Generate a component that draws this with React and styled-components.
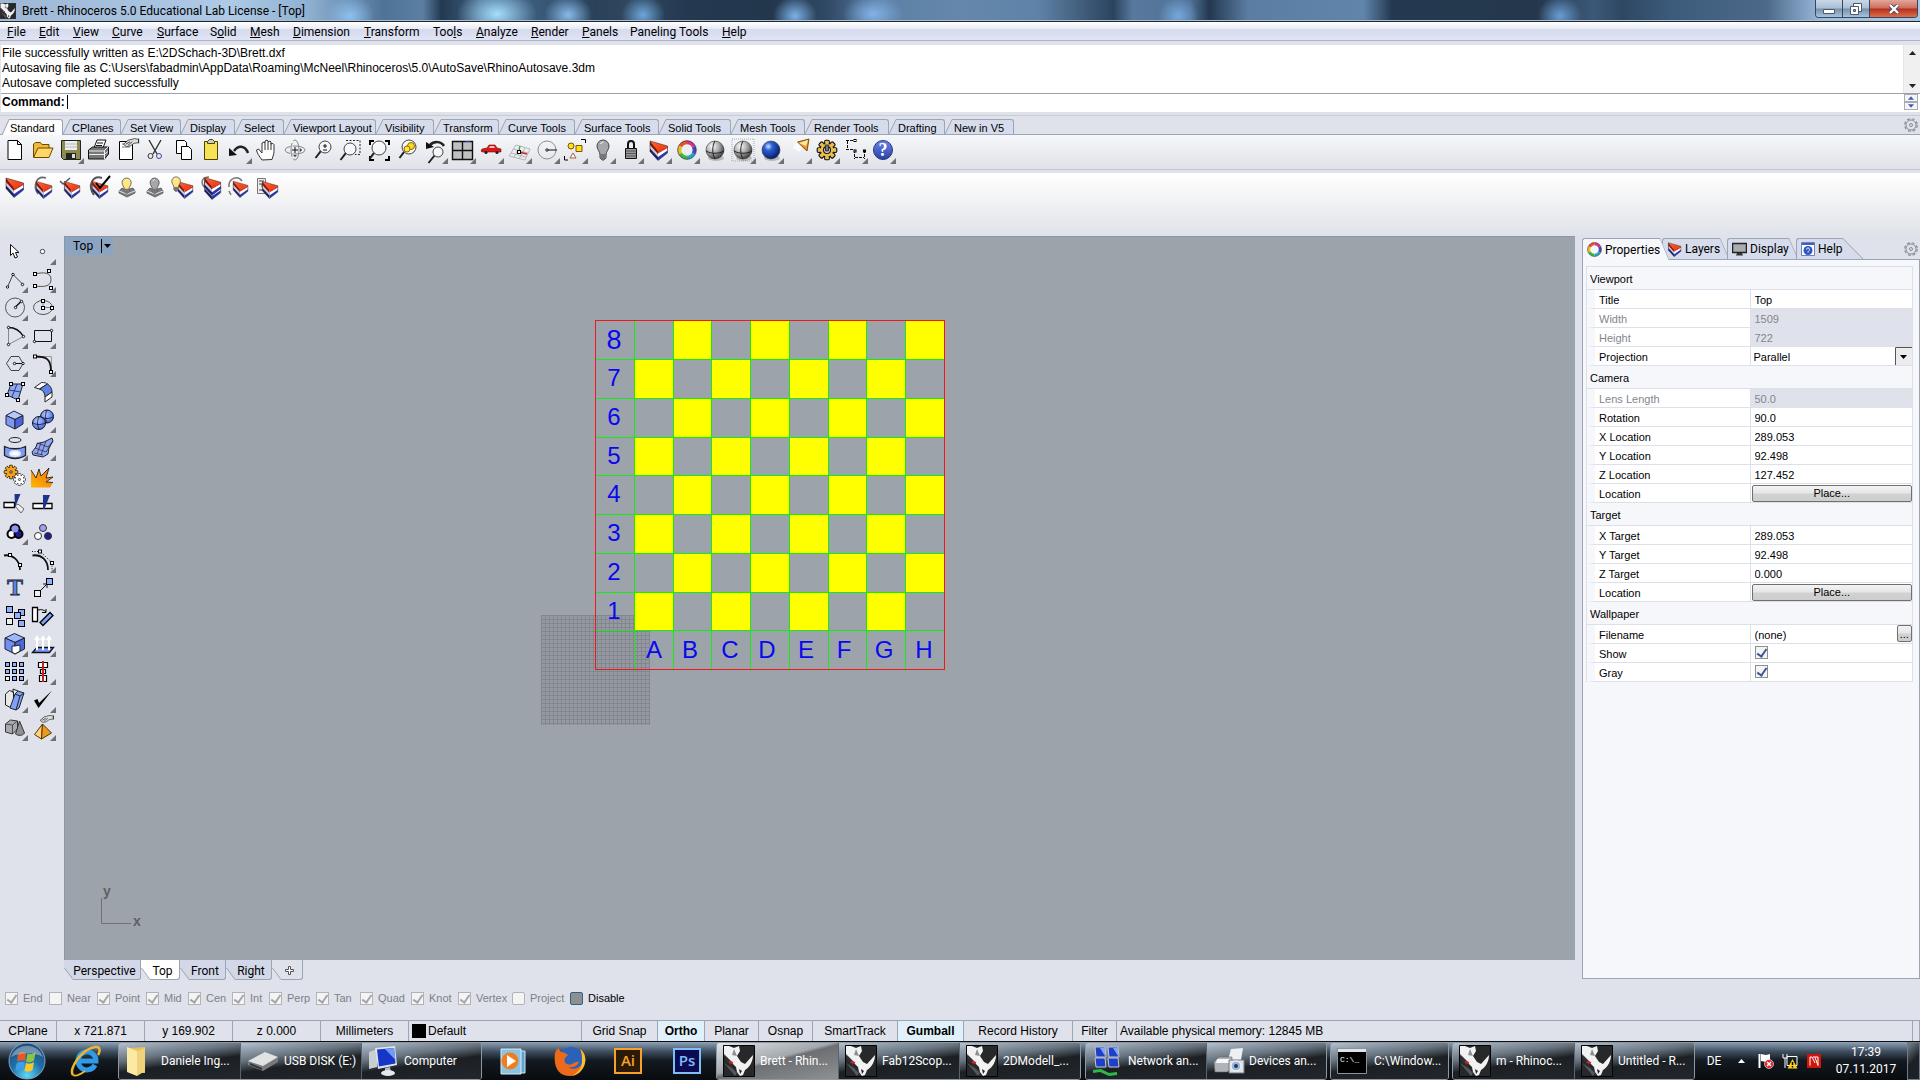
import React from 'react';
import styled, { createGlobalStyle, css } from 'styled-components';

const UI = 'Roboto, "Noto Sans", sans-serif';
const SANS = '"Liberation Sans", Arial, sans-serif';

const GlobalStyle = createGlobalStyle`
  * { box-sizing: border-box; }
  body { margin: 0; background: #dfe2ea; }
  button, input, select { font: inherit; color: inherit; margin: 0; }
  button { padding: 0; border: 0; background: none; }
  svg { display: block; flex: none; }
`

const Page = styled.div`
  display: flex;
  flex-direction: column;
  min-height: 100vh;
  font: 11px/14px ${SANS};
  color: #000;
  background: #dfe2ea;
`

/* title bar */
const TitleBar = styled.header`
  display: flex;
  align-items: flex-start;
  height: 22px;
  border-bottom: 1px solid #23272e;
  box-shadow: inset 0 -1px #a9bed6;
  background:
    radial-gradient(ellipse 24px 20px at 350px 16px, #8cc0ee, transparent),
    radial-gradient(ellipse 40px 26px at 497px 14px, #a5defc, transparent),
    radial-gradient(ellipse 24px 20px at 568px 15px, #86baea, transparent),
    radial-gradient(ellipse 22px 20px at 643px 15px, #6ea6da, transparent),
    radial-gradient(ellipse 22px 20px at 795px 16px, #7cb2e8, transparent),
    radial-gradient(ellipse 30px 20px at 873px 14px, #82b2e6, transparent),
    radial-gradient(ellipse 20px 20px at 1178px 16px, #76a8dc, transparent),
    radial-gradient(ellipse 22px 20px at 1560px 16px, #6a9dd3, transparent),
    linear-gradient(90deg, #9db7d4 0, #aecae6 12%, #8fb1d2 16%, #4f7397 20%, #5b7fa3 22%, #233950 23%, #3f5f80 25%, #3b5a7a 28%, #2b4159 31%, #2f475f 33%, #243850 36%, #22364c 40%, #2f4863 43%, #5d80a6 46%, #6487ab 50%, #5f83a8 54%, #2c435d 58%, #58799d 59%, #4f7195 62%, #23384f 63%, #5b7da3 65%, #6085ab 71%, #24394f 72.5%, #24374d 80%, #3c5878 83%, #2e4763 84.5%, #3c5a7a 87%, #4c698a 92%, #9fbfe0 95%, #a9c8e6 100%);
`
const AppIcon = styled.div`
  padding: 3px 0 0;
`
const Title = styled.h1`
  flex: 1;
  margin: 0;
  padding: 3px 6px 0;
  font: 12px/17px ${UI};
`
const WinButtons = styled.div`
  display: flex;
  height: 18px;
  margin-right: 2px;
  border: 1px solid #34475c;
  border-top: 0;
  border-radius: 0 0 4px 4px;
  overflow: hidden;
`
const WinButton = styled.button`
  display: flex;
  align-items: center;
  justify-content: center;
  width: ${p => (p.$close ? 47 : 27)}px;
  height: 17px;
  border-right: 1px solid #34475c;
  background: linear-gradient(#c9d8e6, #a9bfd4 48%, #7690ab 52%, #a8c3da);
  ${p => p.$close && css`
    border-right: 0;
    background: linear-gradient(#e0a79c, #cf6c5b 48%, #b3301b 52%, #dc6d4c);
  `}
`

/* menu and command area */
const MenuBar = styled.nav`
  display: flex;
  gap: 14px;
  height: 19px;
  padding: 2px 7px 0;
  font: 12px/16px ${UI};
  border-bottom: 1px solid #aeb4c8;
  background: linear-gradient(#ffffff, #e9ecf5 36%, #d5daee 40%, #e0e4f4);
`
const MenuItem = styled.button`
  width: ${p => p.$w}px;
  white-space: nowrap;
  text-align: left;
`
const Command = styled.section`
  display: flex;
  flex-direction: column;
  margin-top: 4px;
  border-left: 1px solid #dfe2ea;
  background: #fff;
  font-size: 12px;
`
const History = styled.div`
  display: flex;
  height: 49px;
  border-bottom: 1px solid #9aa2ae;
`
const HistoryLines = styled.div`
  flex: 1;
  padding: 1px 1px 0;
  line-height: 15px;
`
const Scroll = styled.div`
  display: flex;
  flex-direction: column;
  justify-content: space-between;
  align-items: center;
  width: 17px;
  padding: 6px 0 5px;
  border-left: 1px solid #e4e4e4;
  background: #f0f0f0;
`
const Prompt = styled.div`
  display: flex;
  align-items: center;
  height: 18px;
  padding: 0 0 2px 1px;
  label { font-weight: bold; font-size: 12px; }
`
const PromptInput = styled.input`
  flex: 1;
  height: 14px;
  margin-left: 2px;
  padding: 0;
  border: 0;
  border-left: 1px solid #000;
  outline: 0;
`
const Spinner = styled.div`
  width: 14px;
  margin-right: 2px;
`
const SpinButton = styled.button`
  display: flex;
  align-items: center;
  justify-content: center;
  width: 14px;
  height: 8px;
  border: 1px solid #a9abb0;
  background: #f4f5f9;
`

/* toolbars */
const TabStrip = styled.div`
  display: flex;
  align-items: flex-end;
  height: 20px;
  margin-top: 3px;
  padding-left: 2px;
  border-top: 1px solid #c9ccd4;
  border-bottom: 1px solid #9ba5b4;
`
const Tab = styled.button`
  display: flex;
  width: ${p => p.$w}px;
  height: 15px;
  margin-bottom: ${p => (p.$on ? -1 : 0)}px;
  white-space: nowrap;
  ${p => p.$on && 'height: 16px;'}
`
const TabFace = styled.span`
  flex: 1;
  align-self: stretch;
  padding-left: ${p => (p.$on ? 1 : 2)}px;
  line-height: 16px;
  text-align: left;
  border-top: 1px solid #9ba5b4;
  border-right: 1px solid #9ba5b4;
  border-radius: 0 3px 0 0;
  background: ${p => (p.$on ? '#fdfdfe' : '#d6dcec')};
`
const Spacer = styled.div`
  flex: 1;
`
const GearButton = styled.button`
  align-self: center;
  margin-right: 2px;
`
const Toolbar = styled.div`
  display: flex;
  align-items: flex-start;
  height: ${p => (p.$tall ? 63 : 35)}px;
  padding: ${p => (p.$tall ? 0 : 1)}px 0 0 1px;
  background: linear-gradient(${p => (p.$tall ? '#ffffff' : '#f6f7f9')}, #dfe2e8);
  border-bottom: ${p => (p.$tall ? 0 : 1)}px solid #c3c7d0;
  margin-bottom: ${p => (p.$tall ? 0 : 3)}px;
`
const Tool = styled.button`
  width: 28px;
  height: 28px;
`

/* workspace */
const Workspace = styled.main`
  display: flex;
  flex: 1;
`
const Palette = styled.aside`
  display: grid;
  grid-template-columns: 28px 28px;
  grid-auto-rows: 28px;
  align-content: start;
  width: 64px;
  padding: 1px 0 0 1px;
`
const Center = styled.section`
  display: flex;
  flex-direction: column;
  flex: 1;
  min-width: 0;
`
const Viewport = styled.div`
  position: relative;
  flex: 1;
  min-height: 500px;
  overflow: hidden;
  border-top: 1px solid #8e96a6;
  border-left: 1px solid #8e96a6;
  background: #9ca3ab;
`
const ViewTitle = styled.button`
  position: absolute;
  top: 0;
  left: 0;
  display: flex;
  align-items: center;
  gap: 8px;
  height: 18px;
  padding: 0 2px 0 8px;
  font: 12px/17px ${UI};
  background: #8ba4c1;
`
const ViewMark = styled.span`
  display: flex;
  align-items: center;
  height: 14px;
  padding-left: 2px;
  border-left: 1px solid #000;
`
const Drawing = styled.svg`
  position: absolute;
  top: 0;
  left: 0;
  width: 100%;
  height: 100%;
`
const Axes = styled.svg`
  position: absolute;
  left: 32px;
  bottom: 30px;
`
const ViewTabs = styled.div`
  display: flex;
  height: 20px;
  font: 12px/18px ${UI};
`
const ViewTab = styled.button`
  display: flex;
  width: ${p => p.$w}px;
  height: 20px;
`
const ViewFace = styled.span`
  display: flex;
  align-items: center;
  justify-content: center;
  flex: 1;
  height: 20px;
  padding: 2px 4px 0 0;
  border-right: 1px solid #9ba5b4;
  border-bottom: 1px solid #9ba5b4;
  border-radius: 0 0 3px 0;
  background: ${p => p.$bg};
`

/* properties */
const Side = styled.aside`
  display: flex;
  flex-direction: column;
  width: 345px;
  padding: 2px 0 1px 7px;
`
const PanelTabs = styled.div`
  display: flex;
  height: 22px;
  margin-bottom: -1px;
  font: 12px/20px ${UI};
`
const PanelTab = styled.button`
  display: flex;
  width: ${p => p.$w}px;
  height: ${p => (p.$on ? 22 : 21)}px;
  position: relative;
  z-index: ${p => (p.$on ? 1 : 0)};
`
const PanelFace = styled.span`
  display: flex;
  align-items: center;
  gap: 3px;
  flex: 1;
  align-self: stretch;
  padding-left: 4px;
  white-space: nowrap;
  border: 1px solid #9ba5b4;
  border-width: 1px 0 0 1px;
  border-radius: 3px 0 0 0;
  background: ${p => (p.$on ? '#f6f7fa' : '#d6dcec')};
`
const PanelBody = styled.div`
  flex: 1;
  padding: 6px 6px 0 3px;
  border: 1px solid #9ba5b4;
  background: #f6f7fa;
`
const Props = styled.table`
  width: 100%;
  table-layout: fixed;
  border-collapse: separate;
  border-spacing: 0;
  border-left: 1px solid #dde0ea;
  border-top: 1px solid #dde0ea;
  border-right: 1px solid #dde0ea;
  th, td { padding: 0; font-weight: normal; text-align: left; border-bottom: 1px solid #dde0ea; }
`
const Group = styled.th`
  height: 23px;
  && { padding: 2px 0 0 3px; }
`
const Name = styled.th`
  height: 19px;
  border-left: 8px solid #f6f7fa;
  background: #fff;
  color: ${p => (p.$off ? '#83868c' : '#000')};
  && { padding: 1px 0 0 4px; }
`
const Value = styled.td`
  height: 19px;
  border-left: 1px solid #dde0ea;
  background: ${p => (p.$off ? '#dfe2ea' : '#fff')};
  color: ${p => (p.$off ? '#83868c' : '#000')};
`
const Field = styled.input`
  display: block;
  width: 100%;
  height: 18px;
  padding: 2px 0 0 4px;
  border: 0;
  background: transparent;
`
const SelectWrap = styled.div`
  position: relative;
  svg { position: absolute; top: 0; right: 0; pointer-events: none; }
`
const Select = styled.select`
  display: block;
  width: 100%;
  height: 18px;
  padding: 2px 0 0 3px;
  border: 0;
  appearance: none;
  background: transparent;
`
const Push = styled.button`
  display: block;
  width: calc(100% - 1px);
  height: 17px;
  margin-left: 1px;
  border: 1px solid #707070;
  border-radius: 2px;
  background: linear-gradient(#f3f3f3, #e6e6e6 48%, #d2d2d2 52%, #cdcdcd);
`
const FileRow = styled.div`
  display: flex;
  ${Push} { width: 17px; }
`
const Tick = styled.input`
  display: block;
  flex: none;
  appearance: none;
  width: 13px;
  height: 13px;
  && { margin: ${p => (p.$cell ? '0 0 1px 4px' : '0')}; }
  border: 1px solid ${p => (p.$cell ? '#8e8f8f' : '#b1b3b8')};
  border-radius: ${p => (p.$round ? 2 : 0)}px;
  background: #f4f4f4;
  &:checked::after {
    content: '';
    display: block;
    width: 4px;
    height: 8px;
    margin: 0 0 0 3px;
    border: solid ${p => (p.$cell ? '#3c5594' : '#a5a5a8')};
    border-width: 0 2px 2px 0;
    transform: rotate(35deg);
  }
  ${p => p.$solid && css`
    border-color: #2c628b;
    background: #8e8f8f;
  `}
`

/* osnap, status */
const Snaps = styled.div`
  display: flex;
  height: 40px;
  padding: 11px 0 0 5px;
`
const Snap = styled.label`
  display: flex;
  align-items: center;
  gap: 5px;
  width: ${p => p.$w}px;
  height: 14px;
  color: ${p => (p.$active ? '#000' : '#7d8087')};
  white-space: nowrap;
`
const StatusBar = styled.footer`
  display: flex;
  height: 21px;
  border-top: 1px solid #9ba5b4;
  font-size: 12px;
`
const StatusCell = styled.button`
  display: flex;
  align-items: center;
  justify-content: ${p => (p.$left ? 'flex-start' : 'center')};
  gap: 2px;
  width: ${p => p.$w}px;
  padding-left: ${p => (p.$left ? 3 : 0)}px;
  border-right: 1px solid #9ba5b4;
  font-weight: ${p => (p.$on ? 'bold' : 'normal')};
  background: ${p => (p.$on ? '#e1f1fb' : 'transparent')};
  white-space: nowrap;
  ${p => p.$grow && 'flex: 1;'}
`
const Swatch = styled.span`
  width: 14px;
  height: 14px;
  background: #000;
`

/* taskbar */
const Taskbar = styled.footer`
  display: flex;
  height: 39px;
  border-top: 1px solid #0c1014;
  font: 12px/16px ${UI};
  color: #fff;
  background: linear-gradient(#8ea3b9, #3f4f60 25%, #141a21 48%, #080b0f);
`
const Pinned = styled.button`
  display: flex;
  align-items: center;
  justify-content: center;
  width: ${p => p.$w}px;
`
const TaskGroup = styled.div`
  display: flex;
  margin-right: ${p => p.$mr}px;
  border: 1px solid #8d98a3;
  border-radius: 3px;
  overflow: hidden;
`
const plainTask = 'linear-gradient(172deg, #b4c1ce, #68747f 34%, #33393f 50%, #1c2024 56%, #22272b)'
const activeTask = 'linear-gradient(165deg, #dfe5ea, #a3a8ad 45%, #6d6f72 50%, #8e9194)'
const Task = styled.button`
  display: flex;
  align-items: center;
  gap: ${p => p.$gap}px;
  width: ${p => p.$w}px;
  padding-left: 6px;
  overflow: hidden;
  white-space: nowrap;
  background: ${p => (p.$on ? activeTask : plainTask)};
  & + & { border-left: 1px solid #59646f; }
`
const Tray = styled.div`
  display: flex;
  align-items: center;
  flex: 1;
  justify-content: flex-end;
`
const TrayItem = styled.button`
  display: flex;
  justify-content: center;
  width: ${p => p.$w}px;
`
const Clock = styled.button`
  width: 82px;
  line-height: 17px;
  text-align: center;
`
const ShowDesktop = styled.button`
  align-self: stretch;
  width: 13px;
  border: 1px solid #6f7c88;
  background: linear-gradient(135deg, #75838f, #1c2126 50%);
`

const Defs = styled.svg`
  position: absolute;
`

/* ---------- drawings ---------- */

const Sq = ({ x, y, s = 3, fill = '#fff' }) => (
  <rect x={x - s / 2} y={y - s / 2} width={s} height={s} fill={fill} stroke="#000" />
)
const Dot = ({ x, y, r = 1.2 }) => <circle cx={x} cy={y} r={r} fill="#fff" stroke="#000" strokeWidth=".9" />

// layered wedge: a red top face over red, white and blue slabs
const Wedge = ({ t = '' }) => (
  <g transform={t} stroke="none">
    <path d="M5 5v10.500l8 9V14.500z" fill="#151f6e" />
    <path d="M5 5v7.500l8 8.500v-6.500z" fill="#c9ccd6" />
    <path d="M5 5v4l8 9v-3.500z" fill="#8e1206" />
    <path d="M13 14.500l9.500-4.500v7L13 24.500z" fill="#2238b4" />
    <path d="M13 14.500l9.500-4.500v4.500L13 21z" fill="#fff" />
    <path d="M13 14.500l9.500-4.500v2L13 17.500z" fill="#d63a1c" />
    <path d="M5 5l17.500 5-9.500 5z" fill="url(#red)" />
    <path d="M5 5l17.500 5v7L13 24.500l-8-9z" fill="none" stroke="#3a1414" strokeWidth=".5" />
  </g>
)
const Lens = ({ x = 15, y = 11, r = 6.5 }) => (
  <g>
    <path d={`M${x - r * 0.7} ${y + r * 0.7}L${x - 9.5} ${y + 11}`} stroke="#222" strokeWidth="2" />
    <circle cx={x} cy={y} r={r} fill="#fff" fillOpacity=".5" stroke="#444" />
  </g>
)
const Ball = ({ fill, grid }) => (
  <g>
    <ellipse cx="15" cy="22" rx="8" ry="3" fill="#000" opacity=".2" />
    <circle cx="14" cy="14" r="9" fill={`url(#${fill})`} stroke="#333" strokeWidth=".6" />
    {grid && <path d="M5 15c5 3 13 3 18 0M14 5c-3 5-3 13 0 18" stroke="#222" />}
  </g>
)
const Wheel = () => (
  <g strokeWidth="3.5">
    <path d="M14 6.500a7.500 7.500 0 0 1 6.500 4" stroke="#d9338c" />
    <path d="M14 6.500a7.500 7.500 0 0 0-6.500 4" stroke="#e8502a" />
    <path d="M7.500 10.500a7.500 7.500 0 0 0 0 7" stroke="#e8c21c" />
    <path d="M7.500 17.500a7.500 7.500 0 0 0 6.500 4" stroke="#3db93a" />
    <path d="M14 21.500a7.500 7.500 0 0 0 6.500-4" stroke="#21a9c9" />
    <path d="M20.500 17.500a7.500 7.500 0 0 0 0-7" stroke="#4a45c6" />
    <circle cx="14" cy="14" r="9.3" stroke="#222" strokeWidth=".7" />
  </g>
)
const Bulb = ({ t = '', on }) => (
  <g transform={t}>
    <path d="M14 4a6 6 0 0 0-6 6c0 4 3 5 3 9v3l2 2h2l2-2v-3c0-4 3-5 3-9a6 6 0 0 0-6-6z" fill={on ? '#ffe680' : '#a5a7aa'} stroke="#444" />
    <path d="M11 18h6v4l-2 2h-2l-2-2z" fill="#777" />
    <path d="M11.500 8c1-1.500 2-2 3-2" stroke="#fff" />
  </g>
)
const Stamp = ({ on }) => (
  <g>
    <path d="M6 18l3-3 4 2 7-2 2 3v2l-8 4-8-4z" fill="#7c7e80" stroke="#333" strokeWidth=".6" />
    <path d="M6 18l8 3 8-3" stroke="#ddd" />
    <Bulb t="translate(3 2) scale(.76)" on={on} />
  </g>
)
const Cog = ({ x, y, fill, s = 1, hole = 1.5 }) => (
  <g transform={`translate(${x} ${y}) scale(${s})`} fill={fill} stroke="#111">
    {[0, 45, 90, 135].map(a => <rect key={a} x="-2" y="-8.5" width="4" height="17" rx="1" transform={`rotate(${a})`} />)}
    <circle r="6" />
    {[0, 45, 90, 135].map(a => <rect key={a} x="-1.5" y="-7.5" width="3" height="15" stroke="none" transform={`rotate(${a})`} />)}
    <circle r={hole} fill="#dfe2ea" />
  </g>
)
const Hand = ({ t = '' }) => (
  <g transform={t}>
    <path d="M3 9l6-5 8-2 5 1v4l-6 1-4 3-5 1z" fill="#ddd" stroke="#333" />
    <path d="M6 9l5-3M9 10l5-4M22 2v6" stroke="#222" />
  </g>
)

const ICONS = {
  new: <path d="M7 4.500h9.500l4 4v15H7zM16.500 4.500v4h4" fill="#fff" stroke="#000" />,
  open: <g stroke="#6b4a00"><path d="M4.500 21V8l2-1.500h5l1.500 2h7V12" fill="#f0b93a" /><path d="M4.500 21.500 9 12h15l-4 9.500z" fill="#ffd766" /></g>,
  save: <g><path d="M4.500 4.500h19v19h-17l-2-2z" fill="#8c8a4e" stroke="#222" /><path d="M8 5h12v9H8z" fill="#eceef0" /><path d="M8 8h12M8 11h12" stroke="#b5b8bb" /><path d="M9 17h10v6H9z" fill="#222" /><path d="M15 18h3v4h-3z" fill="#ddd" /></g>,
  print: <g stroke="#111"><path d="M9 12 12 4h9l-3 8" fill="#fff" /><path d="M3.500 14l4-3h16v7l-4 5h-16z" fill="#777" /><path d="M4 15h15l4-4M4 18.500h15l4-3M19.500 15v8" stroke="#eee" /><path d="M12 7h6M11 9.500h6" /></g>,
  prop: <g><path d="M6.500 5.500h13v18h-13z" fill="#fff" stroke="#000" /><path d="M9 8h4M9 11h8" stroke="#777" /><Hand t="translate(8 1) scale(.8)" /></g>,
  cut: <g stroke="#333"><path d="M8 4 16 18M20 4 12 18" strokeWidth="1.4" /><circle cx="9.5" cy="20" r="2.5" /><circle cx="18" cy="20" r="2.5" stroke="#3a4a9c" /></g>,
  copy: <g fill="#fff" stroke="#000"><path d="M7.500 4.500h8l2 2v11h-10z" /><path d="M12.500 10.500h7l3 3v10h-10z" /></g>,
  paste: <g stroke="#4d4300"><path d="M7.500 5.500h13v18h-13z" fill="#f7e255" /><path d="M10.500 7.500v-2l2-2h3l2 2v2z" fill="#ccc" /></g>,
  undo: <g><path d="M9 15C13 9 20 9 23 17" stroke="#222" strokeWidth="2.5" /><path d="M4 12v8l8-1z" fill="#111" /></g>,
  hand: <path d="M9 24C6 20 4 17 3.500 14l2-1 3.500 4V7l2-1 1 1V5l2-1 1 1v1l2-1 1 1v2l2-.5 1 1v7c0 3-1 4-2 8zM12 7v7M15 6v8M18 7v7" fill="#fff" stroke="#333" />,
  rotate: <g stroke="#888"><ellipse cx="14" cy="14" rx="10" ry="4" strokeDasharray="14 2" /><ellipse cx="14" cy="14" rx="4" ry="10" strokeDasharray="14 2" /><path d="M14 11v6M11 14h6" stroke="#111" /><path d="M19 12.500l2 1.500-2 1.500M12.500 19l1.500 2 1.500-2" fill="#111" /></g>,
  zoom: <g><Lens x={16} y={11} r={6} /><path d="M14 10h4M16 8v4M14 14h4" stroke="#111" /></g>,
  zoomwin: <g><path d="M9 4.500h14v14h-5" stroke="#222" strokeDasharray="2 1.500" /><Lens x={13} y={13} r={6} /></g>,
  zoomext: <g><path d="M5 9V5h4M20 5h4v4M24 20v4h-4M5 20v4h4" stroke="#000" strokeWidth="2" /><Lens x={14} y={12} r={7} /></g>,
  zoomsel: <g><Lens x={16} y={11} r={7} /><circle cx="18" cy="10" r="3.5" fill="#ffd91f" stroke="#8a6d00" /><circle cx="14" cy="13" r="3" fill="#ffe640" stroke="#8a6d00" /></g>,
  undoview: <g><Lens x={17} y={16} r={5} /><path d="M9 9c4-4 11-4 14 1" stroke="#222" strokeWidth="2.5" /><path d="M5 6v7l8-2z" fill="#111" /></g>,
  views: <g><path d="M3.500 5.500h20v18h-20z" fill="#bfc0c2" stroke="#111" strokeWidth="1.4" /><path d="M13.500 5v18M3 14.500h20" stroke="#111" strokeWidth="1.4" /><path d="M16 5.500h5" stroke="#2a2ad0" /></g>,
  car: <g><path d="M4 15l1-2 5-1 2-3h6l2 3 4 1v3H5z" fill="#d81717" stroke="#7c0505" strokeWidth=".6" /><path d="M13 10h4l1 2h-6z" fill="#f0c0c0" /><circle cx="9" cy="16.5" r="1.6" fill="#222" /><circle cx="20" cy="16.5" r="1.6" fill="#222" /></g>,
  cplane: <g><path d="M4 20 11 9l14 4-5 11zM6 17l15 4M8 13l15 4M9 21l6-11M14 23l6-11" stroke="#b4b6b9" /><path d="M14 16l1-6" stroke="#2b9b2b" /><path d="M14 16l8 2" stroke="#d02020" strokeWidth="1.5" /><Sq x={14} y={16} /></g>,
  circ: <g><circle cx="14" cy="14" r="9" stroke="#8c8e91" /><path d="M14 14h10" stroke="#111" /><Dot x={14} y={14} /></g>,
  select: <g><circle cx="10" cy="10" r="3" fill="#ffe11a" stroke="#7a5500" /><path d="M15 9.500h6v6h-6z" fill="#ffe11a" stroke="#7a5500" /><path d="M9 22l3-5 3 5z" fill="#fff" stroke="#a55a3a" /><path d="M20 3.500h4.500V7M3.500 20v4H7" stroke="#000" /></g>,
  bulb: <Bulb />,
  lock: <g stroke="#111"><path d="M11 12V8a3 3 0 0 1 6 0v4" strokeWidth="2" /><path d="M8.500 12.500h11v10h-11z" fill="#999" /><path d="M9 15h10M9 17.500h10M9 20h10" stroke="#555" /></g>,
  layer: <Wedge />,
  wheel: <Wheel />,
  ball: <Ball fill="grey" grid />,
  ballsel: <g><path d="M3 3h22v22H3z" stroke="#aaa" strokeDasharray="1 1" /><Ball fill="grey" grid /></g>,
  ballblue: <Ball fill="blue" />,
  light: <g><path d="M11 14 16 6" stroke="#fff" strokeWidth="8" opacity=".7" /><path d="M12.500 6 24 3l-2 12z" fill="#f0961a" stroke="#5b3500" strokeWidth=".8" /><path d="M14 7l9-3-2 6z" fill="#ffe9a0" /></g>,
  gears: <g><Cog x={14} y={14} fill="#e8bf4d" s={1.15} hole={3} /><path d="M12.500 9h3v6h-3z" fill="#777" stroke="#333" /></g>,
  dim: <g stroke="#111"><path d="M5 4.500h8M5 13.500h8M6.500 5v8M13.500 14v9M23.500 14v9M14 21.500h9" strokeDasharray="3 1" /><Sq x={14} y={4.5} s={2} /><Sq x={14} y={15} s={2} /><Sq x={23.5} y={15} s={2} /></g>,
  help: <g><circle cx="14" cy="14" r="9.5" fill="url(#blue2)" stroke="#26367c" /><text x="14" y="20" textAnchor="middle" fontFamily="Liberation Serif, serif" fontWeight="bold" fontSize="18" fill="#fff" stroke="none">?</text></g>,

  w1: <Wedge />,
  w2: <g><path d="M17 5C8 2 3 12 9 21" stroke="#666" strokeWidth="1.5" /><Wedge t="translate(3 4) scale(.88)" /></g>,
  w3: <g><Wedge t="translate(3 4) scale(.88)" /><path d="M3 8l3 3 7-6" stroke="#555" strokeWidth="1.5" /></g>,
  w4: <g><path d="M17 5C8 2 2 12 9 22" stroke="#555" strokeWidth="2" /><Wedge t="translate(3 4) scale(.88)" /><path d="M11 10l4 5L25 3" stroke="#000" strokeWidth="2" /></g>,
  w5: <Stamp on />,
  w6: <Stamp />,
  w7: <g><Wedge t="translate(4 4) scale(.88)" /><Bulb t="translate(-3 1) scale(.72)" on /></g>,
  w8: <g><path d="M12 4C6 4 3 8 7 14" stroke="#777" strokeWidth="1.5" /><Wedge t="translate(3 4) scale(.92)" /><Wedge t="translate(3 0) scale(.92)" /></g>,
  w9: <g><Wedge t="translate(4 4) scale(.84)" /><path d="M4 14C3 5 13 2 17 8M4 18l2 4" stroke="#777" strokeWidth="1.5" /></g>,
  w10: <g><path d="M4.500 5.500h8v15h-8z" fill="#eee" stroke="#777" /><path d="M6 8h5M6 11h3v3h3M6 17h4" stroke="#444" /><Wedge t="translate(5 4) scale(.88)" /></g>,

  arrow: <path d="M9.500 7.500v11l2.500-2.500 2 5 2.500-1-2-4.500H18z" fill="#fff" stroke="#111" />,
  point: <circle cx="13.5" cy="14.5" r="2.2" fill="#fff" stroke="#444" />,
  pline: <g><path d="M6.500 22 12 9.500l10 10" stroke="#444" /><Dot x={6.5} y={22} /><Dot x={12} y={9.5} /><Dot x={21.5} y={19.5} /></g>,
  curve: <g><path d="M6 9c8-2 16-2 16 5.500S14 22 6 21" stroke="#555" /><Sq x={6} y={9} /><Sq x={20} y={6} /><Sq x={6} y={21} /><Sq x={22} y={23} /></g>,
  circle: <g><circle cx="14" cy="14.5" r="9.5" stroke="#555" /><path d="M14 14.500 20.500 8" stroke="#111" strokeWidth="1.4" /><Dot x={14.5} y={14.5} /><Dot x={20.5} y={8.5} /></g>,
  ellipse: <g><ellipse cx="14" cy="14.5" rx="9.5" ry="7" stroke="#555" /><path d="M14 8v6.500h9" stroke="#888" /><Sq x={14} y={8} /><Sq x={14} y={15} /><Sq x={23} y={15} /></g>,
  arc: <g><path d="M7.500 23.500v-17M7.500 23.500l15-8" stroke="#888" /><path d="M7.500 6.500c7 0 12 4 15 9" stroke="#111" strokeWidth="1.4" /><Dot x={7.5} y={6.5} /><Dot x={22.5} y={15.5} /><Dot x={7.5} y={23.5} /></g>,
  rect: <g><path d="M5.500 9.500h17v11h-17z" stroke="#111" /><Dot x={22.5} y={9.5} /><Dot x={5.5} y={20.5} /></g>,
  polygon: <g><path d="M5.500 14.500 10 7.500h8l4 7-4 7h-8z" stroke="#444" /><path d="M14 14.500h8" stroke="#111" /><Dot x={13.5} y={14.5} /><Dot x={22} y={14.5} /></g>,
  fillet: <g><path d="M6 7.500h16.500V23" stroke="#999" /><path d="M6 7.500c11 0 16 2 16 15" stroke="#111" strokeWidth="1.8" /><Sq x={6} y={7.5} /><Sq x={22} y={23} /></g>,
  srf: <g><path d="M10 7h12l-5 16-11-5z" fill="#8fa8f4" stroke="#222" /><path d="M16 7l-5 13M8 13l12 2" stroke="#333a78" /><Sq x={10} y={7} /><Sq x={22} y={7} /><Sq x={17} y={23} /><Sq x={6} y={18} /></g>,
  loft: <g stroke="#222"><path d="M5.500 10.500l7-5c3 0 5 .5 6 1.500l-8 5z" fill="#fff" /><path d="M10.500 12l8-5c3 2 4.500 5 4.500 8l-7 5c0-4-2-7-5.500-8z" fill="#5f82e8" /><path d="M16 20l7-5v5l-7 5z" fill="#fff" /></g>,
  box: <g stroke="#223"><path d="M5 10.500 13 6l9 4.500-8 4z" fill="#b8c6fa" /><path d="M5 10.500l9 4v9.500l-9-4.500z" fill="#7d98f5" /><path d="M22 10.500l-8 4V24l8-5z" fill="#4a66d8" /></g>,
  spheres: <g stroke="#112"><circle cx="18" cy="11.5" r="6.5" fill="url(#blue3)" /><circle cx="10" cy="18" r="6.5" fill="url(#blue3)" /><path d="M12 12c4 2 8 2 12 0M18 5c-2 4-2 9 0 13M4 18c4 2 8 2 12 0M10 12c-2 4-2 8 0 12" strokeWidth=".8" /></g>,
  cylcut: <g stroke="#222"><ellipse cx="14" cy="7" rx="6" ry="2.5" /><path d="M3.500 13.500c6 3 15 3 21 0v9c-6 4-15 4-21 0z" fill="#7d9bf5" strokeWidth="1.3" /><ellipse cx="14" cy="20.5" rx="5" ry="2.5" fill="#fff" stroke="#dfe6ff" strokeWidth="2" /></g>,
  patch: <g stroke="#223"><path d="M8 10.500 15 9l8-4 1 3-4 7-1 6-5 3-10-2-1-3 4-5z" fill="#8ea6f2" /><path d="M8 10l11 4 5-6M6 15l11 4 4-6M5 20l9 2M12 10l-4 11M17 8l-5 14" strokeWidth=".7" /></g>,
  cogs: <g><Cog x={10} y={11} fill="#f5a21b" s={0.8} /><Cog x={18.5} y={18.5} fill="#fff" s={0.7} /></g>,
  explode: <g><path d="M2 9l5 8L10 8l2 7 8-8-3 10 7-1-7 5 7 .5-3 5H2z" fill="url(#fire)" /><path d="M2 9l5 8L10 8l2 7 8-8-3 10 7-1-7 5 7 .5" stroke="#111" strokeWidth=".8" /></g>,
  trim: <g stroke="#000"><path d="M3 13.500h10.500v5H3z" fill="#fff" strokeWidth="1.3" /><path d="M14 17l3-2 6 5-3 4z" fill="#eee" stroke="#666" /><path d="M13.500 5h6L14 18.500z" fill="#1d358c" stroke="none" /></g>,
  split: <g><path d="M4 14.500h19v5H4z" fill="#fff" stroke="#000" strokeWidth="1.3" /><path d="M14 6h7l-5.500 14H14z" fill="#1d358c" /></g>,
  join: <g stroke="#000" strokeWidth="2"><circle cx="14" cy="12" r="4.5" fill="#8e92f0" /><circle cx="10.5" cy="17" r="4" fill="#fff" /><circle cx="17.5" cy="17" r="4" fill="#1c1c8a" /><circle cx="14" cy="12" r="3.5" fill="#8e92f0" stroke="none" /></g>,
  unjoin: <g stroke="#333"><circle cx="14" cy="11" r="3.5" fill="#9e9ff8" /><circle cx="9" cy="19" r="3.5" fill="#fff" /><circle cx="19" cy="19" r="3.5" fill="#1c1c8a" /></g>,
  bridge: <g><path d="M3 10.500C11 9 19 15 19 25" stroke="#111" strokeWidth="1.8" /><Sq x={9} y={10} /><Sq x={19} y={20} /></g>,
  handles: <g><path d="M3.500 10.500C12 9 19 15 19 25" stroke="#111" strokeWidth="1.8" /><path d="M3 6.500h8l12 11V26" stroke="#111" strokeDasharray="1 1.5" /><Sq x={11} y={6.5} /><Sq x={23} y={18} /></g>,
  text: <text x="14" y="22" textAnchor="middle" fontFamily="Liberation Serif, serif" fontWeight="bold" fontSize="24" fill="#5d83ea" stroke="#223" strokeWidth=".8">T</text>,
  move: <g><path d="M12 17l6-6M14 11h4v4" stroke="#111" /><Sq x={8.5} y={20.5} s={6} fill="#eee" /><Sq x={20.5} y={8.5} s={6} fill="#8fb0fa" /></g>,
  group: <g><Sq x={8.5} y={8.5} s={6} fill="#8fb0fa" /><Sq x={20.5} y={11.5} s={6} fill="#8fb0fa" /><Sq x={16.5} y={14.5} s={6} fill="#8fb0fa" /><Sq x={8.5} y={20.5} s={6} fill="#eee" /><Sq x={20.5} y={22.5} s={6} fill="#8fb0fa" /></g>,
  rotate2: <g stroke="#000"><path d="M3.500 6.500h5v14h-5z" fill="#fff" strokeWidth="1.3" /><path d="M21 11.500l3 3-10 10-3-3z" fill="#7fa2f7" strokeWidth="1.3" /><path d="M9 9c4-1 6 0 8 2M17 8v3.500h-4" /></g>,
  boolean: <g stroke="#223"><path d="M4 9l9.500-4.500L23.500 9l-9.500 4.500z" fill="#9fb6fb" /><path d="M4 9l10 4.500V25L4 20z" fill="#6f8ff5" /><path d="M23.500 9 14 13.500V25l9.500-5z" fill="#4968dc" /><path d="M11 17h3l5-1v6l-5 3-3-2z" fill="#fff" /></g>,
  extrude: <g><path d="M3.500 23.500 8 18.500h16.500l-4 5z" fill="#7d9bf5" stroke="#112" strokeWidth="1.3" /><path d="M8 21V10M14 21V10M20 21V10M6 11l2-3 2 3M12 11l2-3 2 3M18 11l2-3 2 3" stroke="#fff" strokeWidth="2" /></g>,
  array: <g>{[7.5, 14.5, 21.5].map(y => [6.5, 13.5, 20.5].map(x => <Sq key={x + '-' + y} x={x} y={y} s={4} fill={x < 7 && y > 21 ? '#eee' : '#8fb0fa'} />))}</g>,
  align: <g><path d="M9.500 5.500h9v5h-9zM11.500 12.500h5v4h-5zM10.500 18.500h7v6h-7z" fill="#fff" stroke="#000" strokeWidth="1.2" /><path d="M14 4v21" stroke="#c81e1e" strokeWidth="2" /></g>,
  flow: <g stroke="#222"><path d="M4.500 9l4-3.500 4 1.500v12l-4 3-4-2z" fill="#e8e8e8" /><path d="M14 9l3-3 6 2-5 15-3 2-6-2z" fill="#7fa2f7" /><path d="M14 9l5 2-4 14M19 11l4-3M12 8V4l5 2" /></g>,
  check: <path d="M5 15.500 8.500 14l1.500 4L23 5.500 9.500 23z" fill="#000" />,
  solids: <g stroke="#333"><path d="M4.500 11l5-4 7 1v8l-5 5-7-2z" fill="#a8aaad" /><path d="M4.500 11l7 1 5-4M11.500 12v9" strokeWidth=".8" /><path d="M18.500 8l5 12c-2 3-6 3-9 1z" fill="#8f9194" /></g>,
  pyramid: <g><Hand t="translate(9 1) scale(.7)" /><path d="M13.500 11 5.500 21.500l7 4.500z" fill="#ffd37a" stroke="#553300" /><path d="M13.500 11l9 9-10 6z" fill="#e89b1f" stroke="#553300" /></g>,
}

const Icon = ({ name, flyout }) => (
  <svg width="28" height="28" viewBox="0 0 28 28" fill="none">
    {ICONS[name]}
    {flyout && <path d="M27 22v6h-6z" fill="#6d7075" />}
  </svg>
)

const Triangle = ({ up, color = '#222', s = 7 }) => (
  <svg width={s} height="4" viewBox="0 0 7 4"><path d={up ? 'M0 4 3.500 0 7 4z' : 'M0 0h7L3.500 4z'} fill={color} /></svg>
)

const Gear = () => (
  <svg width="14" height="14" viewBox="0 0 14 14" fill="none" stroke="#888b92">
    <circle cx="7" cy="7" r="5" />
    <circle cx="7" cy="7" r="6.3" strokeDasharray="3 1.95" strokeWidth="1.2" />
    <circle cx="7" cy="7" r="1.5" />
  </svg>
)

const Rhino = ({ w = 32, h = 32 }) => (
  <svg width={w} height={h} viewBox="0 0 32 32">
    <path d="M.5.500h31v31H.5z" fill="#26282a" stroke="#050505" />
    <path d="M1 1h5l5 2 5-2 1 5-3 5 4 6 4 2 8-9c0 6-3 12-8 15l-2 5-3 1-3-4-1-5-5-5-5-3-2-5z" fill="#f2f2f2" />
    <path d="M1 9l5 5 3 3v5L3 16z" fill="#2e3032" />
    <path d="M11 4l3 7-5-1z" fill="#8c8e90" />
    <path d="M1 18l8 5 5 5-2 3-5-6z" fill="#55585a" />
    <path d="M6 17l4 1" stroke="#e02020" strokeWidth="2" />
    <path d="M16 24l3 2-2 3z" fill="#222" />
  </svg>
)

const Orb = () => (
  <svg width="38" height="38" viewBox="0 0 38 38">
    <circle cx="19" cy="19" r="18" fill="url(#orb)" stroke="#7fa6c4" />
    <path d="M10 12c3-2 5-2 8-1l-1 8c-3-1-5-1-8 1z" fill="#e8582a" />
    <path d="M19.500 11.500c3 1 5 1 8-1l-1.500 8c-3 2-5 2-8 1z" fill="#8cc63c" />
    <path d="M8.500 21.500c3-2 5-2 8-1l-1 7.500c-3-1-5-1-8 1z" fill="#3f9ee8" />
    <path d="M18 21c3 1 5 1 8-1l-1.500 8c-3 2-5 2-8 1z" fill="#fbc82c" />
    <path d="M3 15a17 17 0 0 1 32 0c-9-5-23-5-32 0z" fill="#fff" opacity=".35" />
  </svg>
)
const Explorer = () => (
  <svg width="32" height="32" viewBox="0 0 32 32" fill="none">
    <path d="M25 20a9 9 0 1 1 1-4H10" stroke="#2f9ae6" strokeWidth="5" />
    <path d="M3 30C-2 24 12 4 25 2c6-1 5 5 3 8" stroke="#f0b52a" strokeWidth="2.5" />
    <path d="M3 30c3 2 8-1 12-4" stroke="#f0b52a" strokeWidth="2" />
  </svg>
)
const Folder = () => (
  <svg width="24" height="32" viewBox="0 0 24 32">
    <path d="M4 3l16-1v26H8z" fill="#e3c260" />
    <path d="M2 2l10 4v25L2 27z" fill="#fbe9a4" />
    <path d="M12 6l8-3v23l-8 5z" fill="#f0d27a" />
  </svg>
)
const Disk = () => (
  <svg width="32" height="22" viewBox="0 0 32 22">
    <path d="M1 11 18 2l13 5v5l-15 9-15-6z" fill="#77797c" />
    <path d="M1 11 18 2l13 5-15 9z" fill="#e0e2e4" />
    <path d="M3 13l12 5v2L3 15z" fill="#333" />
  </svg>
)
const Computer = () => (
  <svg width="30" height="32" viewBox="0 0 30 32">
    <path d="M1 7l8-3v18l-8 2z" fill="#c9ced2" />
    <path d="M7 3l20-2 2 19-19 4z" fill="#dfe4e8" />
    <path d="M9 4.500 26 3l1.500 15.500-16.500 3z" fill="#1636c8" />
    <path d="M17 4l9-1 1.500 12z" fill="#6f9cf5" />
    <path d="M17 23l5-1 1 5h-6z" fill="#b6bbc0" />
    <ellipse cx="20" cy="28" rx="7" ry="3" fill="#e6e9ec" />
  </svg>
)
const Media = () => (
  <svg width="28" height="30" viewBox="0 0 28 30">
    <path d="M6 5h20v22H6z" fill="#5fa3cf" stroke="#cfe6f5" />
    <path d="M2 3h20v25H2z" fill="#8cc3e2" stroke="#d7ecf8" />
    <circle cx="11" cy="15" r="8.5" fill="#f07c1c" />
    <path d="M8 9l9 6-9 6z" fill="#fff" />
  </svg>
)
const Firefox = () => (
  <svg width="32" height="32" viewBox="0 0 32 32">
    <circle cx="17" cy="15" r="13" fill="#2b62b8" />
    <path d="M1 8c1-3 2-3 3-5l3 4c2 0 5 1 7 3l-3 3c-2 4 2 8 7 6 3-1 4-3 7-2-2 5-8 6-11 5 5 4 14 1 15-6 1-5-1-9-3-12 5 4 6 9 5 14-2 9-9 13-15 13C6 31-1 24 1 8z" fill="#ee6a1b" />
    <path d="M26 4c5 4 6 9 5 14-2 8-8 12-13 13 6-3 10-9 10-15 0-5 0-8-2-12z" fill="#fbc02a" />
  </svg>
)
const Adobe = ({ label, bg, fg }) => (
  <svg width="28" height="26" viewBox="0 0 28 26">
    <path d="M1 1h26v24H1z" fill={bg} stroke={fg} strokeWidth="2" />
    <text x="14" y="18" textAnchor="middle" fontFamily="Open Sans, sans-serif" fontWeight="600" fontSize="15" fill={fg}>{label}</text>
  </svg>
)
const Network = () => (
  <svg width="30" height="32" viewBox="0 0 30 32">
    <path d="M3 2h10l1 10H4zM16 2h10l1 10H17zM3 13h10l1 9H4zM16 13h10l1 9H17z" fill="#1d3fc9" stroke="#c3c9d0" />
    <path d="M8 3l5 8V3zM21 3l5 8V3z" fill="#7ea6f4" />
    <path d="M1 25l8-1 8 4 8-1v3l-8 1-9-4-7 1z" fill="#2fb84a" />
  </svg>
)
const Devices = () => (
  <svg width="32" height="28" viewBox="0 0 32 28">
    <path d="M18 2l12-1-2 12H15z" fill="#eef1f3" />
    <path d="M1 15l5-5h13v12l-5 3H2z" fill="#aeb4b9" stroke="#666" strokeWidth=".6" />
    <path d="M4 12h13v4H3z" fill="#f5f7f8" />
    <path d="M16 13h15v13H16z" fill="#dde2e6" stroke="#778" />
    <circle cx="23" cy="19" r="5" fill="#9db8d6" stroke="#fff" />
    <circle cx="23" cy="19" r="2" fill="#1c3a66" />
  </svg>
)
const Terminal = () => (
  <svg width="30" height="26" viewBox="0 0 30 26">
    <path d="M.5.500h29v25H.5z" fill="#000" stroke="#8c9299" />
    <path d="M1 1h28v3H1z" fill="#dfe4ea" />
    <text x="3" y="14" fontFamily="Liberation Mono, monospace" fontSize="8" fill="#fff">C:\_</text>
  </svg>
)
const HelpBook = () => (
  <svg width="14" height="14" viewBox="0 0 14 14">
    <path d="M.5.500h13v13H.5z" fill="#fff" stroke="#6d83b8" />
    <path d="M1 1h12v2H1z" fill="#3a5fc8" />
    <circle cx="7" cy="8.5" r="4.5" fill="#2f55c6" />
    <path d="M5.500 7.500c0-2 3-2 3 0 0 1.500-1.500 1-1.500 3" stroke="#fff" fill="none" />
  </svg>
)
const Monitor = () => (
  <svg width="15" height="14" viewBox="0 0 15 14">
    <path d="M.5 1.500h14v9H.5z" fill="#a9acb0" stroke="#222" strokeWidth="1.5" />
    <path d="M5 11h5l1 2.500H4z" fill="#333" />
  </svg>
)
const PanelIcon = ({ children, box = '4 4 20 20' }) => (
  <svg width="15" height="15" viewBox={box} fill="none">{children}</svg>
)

/* ---------- data ---------- */

const menus = [
  ['', 'F', 'ile', 18], ['', 'E', 'dit', 20], ['', 'V', 'iew', 25], ['', 'C', 'urve', 31], ['', 'S', 'urface', 39],
  ['S', 'o', 'lid', 26], ['', 'M', 'esh', 29], ['', 'D', 'imension', 57], ['', 'T', 'ransform', 55], ['Too', 'l', 's', 29],
  ['', 'A', 'nalyze', 41], ['', 'R', 'ender', 37], ['', 'P', 'anels', 34], ['Paneling Tools', '', '', 78], ['', 'H', 'elp', 25]
]

const tabs = [
  ['Standard', 61], ['CPlanes', 58], ['Set View', 60], ['Display', 54], ['Select', 49], ['Viewport Layout', 92],
  ['Visibility', 58], ['Transform', 65], ['Curve Tools', 76], ['Surface Tools', 84], ['Solid Tools', 72],
  ['Mesh Tools', 74], ['Render Tools', 84], ['Drafting', 56], ['New in V5', 69]
]

// a trailing + means the tool has a flyout
const mainTools = ('new open save+ print prop cut copy paste undo+ hand rotate zoom zoomwin zoomext zoomsel undoview+ views+ car+ ' +
  'cplane+ circ+ select+ bulb+ lock+ layer+ wheel+ ball ballsel+ ballblue+ light+ gears+ dim+ help+').split(' ')
const layerTools = 'w1 w2 w3 w4 w5 w6 w7 w8 w9 w10'.split(' ')
const sideTools = ('arrow point+ pline+ curve+ circle+ ellipse+ arc+ rect+ polygon+ fillet+ srf+ loft+ box+ spheres+ cylcut+ patch+ ' +
  'cogs explode trim split join+ unjoin bridge handles+ text move+ group rotate2 boolean+ extrude+ array+ align+ flow+ check+ solids+ pyramid+').split(' ')

const groups = [
  ['Viewport', [['Title', 'Top'], ['Width', '1509', 'off'], ['Height', '722', 'off'], ['Projection', 'Parallel', 'select']]],
  ['Camera', [['Lens Length', '50.0', 'off'], ['Rotation', '90.0'], ['X Location', '289.053'], ['Y Location', '92.498'], ['Z Location', '127.452'], ['Location', 'Place...', 'button']]],
  ['Target', [['X Target', '289.053'], ['Y Target', '92.498'], ['Z Target', '0.000'], ['Location', 'Place...', 'button']]],
  ['Wallpaper', [['Filename', '(none)', 'file'], ['Show', '', 'check'], ['Gray', '', 'check']]]
]

const snaps = [
  ['End', 44, true], ['Near', 48, false], ['Point', 49, true], ['Mid', 42, true], ['Cen', 44, true], ['Int', 37, true],
  ['Perp', 47, true], ['Tan', 44, true], ['Quad', 51, true], ['Knot', 47, true], ['Vertex', 54, true], ['Project', 58, false], ['Disable', 70, false]
]

const status = [
  ['CPlane', 57], ['x 721.871', 88], ['y 169.902', 88], ['z 0.000', 88], ['Millimeters', 88], ['Default', 173], ['Grid Snap', 76],
  ['Ortho', 47, true], ['Planar', 54], ['Osnap', 54], ['SmartTrack', 85], ['Gumball', 66, true], ['Record History', 109], ['Filter', 44]
]

/* ---------- parts ---------- */

const Tools = ({ list }) => list.map(t => {
  const name = t.replace('+', '')
  return <Tool key={name} aria-label={name}><Icon name={name} flyout={t !== name} /></Tool>
})

const cols = [595, 634, 673, 711, 750, 789, 828, 866, 905, 944]
const rows = [320, 359, 398, 437, 475, 514, 553, 592, 630, 669]
const letters = [['A', 654], ['B', 690], ['C', 730], ['D', 767], ['E', 806], ['F', 844], ['G', 884], ['H', 924]]

const Board = () => {
  const squares = []
  for (let r = 0; r < 8; r++) {
    for (let c = 1; c < 9; c++) {
      if ((r + c) % 2 === 0) {
        squares.push(<rect key={r + '-' + c} x={cols[c]} y={rows[r]} width={cols[c + 1] - cols[c]} height={rows[r + 1] - rows[r]} fill="#ffff00" />)
      }
    }
  }
  return (
    <g transform="translate(-65 -237)">
      <rect x="541" y="615" width="109" height="110" fill="#959aa2" />
      <rect x="541" y="615" width="109" height="110" fill="url(#mesh)" />
      {squares}
      <g stroke="#14ec14" shapeRendering="crispEdges">
        {cols.slice(1, 9).map(x => <path key={x} d={`M${x}.5 321V670`} />)}
        {rows.slice(1, 9).map(y => <path key={y} d={`M596 ${y}.5H944`} />)}
      </g>
      <rect x="595.5" y="320.5" width="349" height="349" fill="none" stroke="#f01818" shapeRendering="crispEdges" />
      <g fill="#0808f0" fontFamily="Liberation Sans, Arial, sans-serif" fontSize="24" textAnchor="middle">
        {[8, 7, 6, 5, 4, 3, 2, 1].map((n, i) => <text key={n} x="614" y={rows[i] + (n === 8 ? 29 : 27)} fontSize={n === 8 ? 27 : 24}>{n}</text>)}
        {letters.map(([n, x]) => <text key={n} x={x} y="658">{n}</text>)}
      </g>
    </g>
  )
}

const PropRow = ({ group, row }) => {
  const [name, value, kind] = row
  const id = (group + '-' + name).toLowerCase().replace(/ /g, '-')
  const off = kind === 'off'
  let control = <Field id={id} defaultValue={value} disabled={off} />
  if (kind === 'select') {
    control = (
      <SelectWrap>
        <Select id={id}><option>{value}</option></Select>
        <svg width="17" height="18" viewBox="0 0 17 18"><path d="M.5 18V.5H17" fill="#ececec" stroke="#555" /><path d="M1 1h16v17H1z" fill="#ececec" /><path d="M5 8h7l-3.500 4z" /></svg>
      </SelectWrap>
    )
  }
  if (kind === 'button') control = <Push id={id}>{value}</Push>
  if (kind === 'file') control = <FileRow><Field id={id} defaultValue={value} /><Push aria-label="Browse">...</Push></FileRow>
  if (kind === 'check') control = <Tick $cell id={id} type="checkbox" defaultChecked />
  return (
    <tr>
      <Name $off={off} scope="row"><label htmlFor={id}>{name}</label></Name>
      <Value $off={off}>{control}</Value>
    </tr>
  )
}

const SidePanelTab = ({ label, icon, w, slant, on }) => (
  <PanelTab $w={w} $on={on}>
    <PanelFace $on={on}>{icon}{label}</PanelFace>
    <svg width={slant} height={on ? 22 : 21} viewBox="0 0 20 21" preserveAspectRatio="none">
      <path d="M0 0 20 21H0z" fill={on ? '#f6f7fa' : '#d6dcec'} />
      <path d="M0 .5 20 21" stroke="#9ba5b4" />
    </svg>
  </PanelTab>
)

const BottomTab = ({ children, w, bg = '#d2d8e8' }) => (
  <ViewTab $w={w}>
    <svg width="9" height="20" viewBox="0 0 9 20">
      <path d="M0 0v8l9 12V0z" fill={bg} />
      <path d="M.5 8 9 19.500" stroke="#9ba5b4" fill="none" />
    </svg>
    <ViewFace $bg={bg}>{children}</ViewFace>
  </ViewTab>
)

const App = () => (
  <Page>
    <GlobalStyle />
    <Defs width="0" height="0">
      <defs>
        <linearGradient id="red" x1="0" y1="0" x2="1" y2="1"><stop stopColor="#ff6a3a" /><stop offset="1" stopColor="#e8300c" /></linearGradient>
        <radialGradient id="grey" cx=".35" cy=".3" r=".75"><stop stopColor="#fff" /><stop offset=".5" stopColor="#aaa" /><stop offset="1" stopColor="#333" /></radialGradient>
        <radialGradient id="blue" cx=".35" cy=".3" r=".75"><stop stopColor="#cfe4ff" /><stop offset=".3" stopColor="#2a62d8" /><stop offset="1" stopColor="#06185c" /></radialGradient>
        <linearGradient id="blue2" x1="0" y1="0" x2="0" y2="1"><stop stopColor="#6d86e6" /><stop offset="1" stopColor="#2a3fa8" /></linearGradient>
        <radialGradient id="blue3" cx=".4" cy=".35" r=".7"><stop stopColor="#b5c8ff" /><stop offset="1" stopColor="#3f63dc" /></radialGradient>
        <linearGradient id="fire" x1="0" y1="1" x2="1" y2="0"><stop stopColor="#ffb800" /><stop offset="1" stopColor="#f06a10" /></linearGradient>
        <radialGradient id="orb" cx=".5" cy=".9" r=".9"><stop stopColor="#5fd8f5" /><stop offset=".5" stopColor="#1f6ea8" /><stop offset="1" stopColor="#244a70" /></radialGradient>
        <pattern id="mesh" x="541" y="615" width="4" height="4" patternUnits="userSpaceOnUse"><path d="M0 .5h4M.5 0v4" stroke="#82878f" /></pattern>
      </defs>
    </Defs>

    <TitleBar>
      <AppIcon><Rhino w={16} h={16} /></AppIcon>
      <Title>Brett - Rhinoceros 5.0 Educational Lab License - [Top]</Title>
      <WinButtons>
        <WinButton aria-label="Minimize"><svg width="12" height="11"><path d="M.5 6.500h11v4H.5z" fill="#fff" stroke="#4a5a70" /></svg></WinButton>
        <WinButton aria-label="Restore"><svg width="12" height="12" fill="#fff" stroke="#4a5a70"><path d="M3.500.5h8v8h-8z" /><path d="M.5 3.500h8v8h-8z" /><path d="M3.500 6.500h2v2h-2z" fill="#8ca4bd" /></svg></WinButton>
        <WinButton $close aria-label="Close"><svg width="12" height="10" viewBox="0 0 12 10"><path d="M2 1l8 8M10 1 2 9" stroke="#4a4a5c" strokeWidth="4" /><path d="M2 1l8 8M10 1 2 9" stroke="#fff" strokeWidth="2.4" /></svg></WinButton>
      </WinButtons>
    </TitleBar>

    <MenuBar>
      {menus.map(([a, key, b, w]) => <MenuItem key={a + key + b} $w={w}>{a}{key && <u>{key}</u>}{b}</MenuItem>)}
    </MenuBar>

    <Command>
      <History>
        <HistoryLines>
          <div>File successfully written as E:\2DSchach-3D\Brett.dxf</div>
          <div>Autosaving file as C:\Users\fabadmin\AppData\Roaming\McNeel\Rhinoceros\5.0\AutoSave\RhinoAutosave.3dm</div>
          <div>Autosave completed successfully</div>
        </HistoryLines>
        <Scroll><Triangle up /><Triangle /></Scroll>
      </History>
      <Prompt>
        <label htmlFor="command">Command:</label>
        <PromptInput id="command" />
        <Spinner>
          <SpinButton aria-label="Previous"><Triangle up color="#4458a8" s={6} /></SpinButton>
          <SpinButton aria-label="Next"><Triangle color="#4458a8" s={6} /></SpinButton>
        </Spinner>
      </Prompt>
    </Command>

    <TabStrip>
      {tabs.map(([label, w], i) => (
        <Tab key={label} $w={w} $on={i === 0}>
          <svg width="7" height={i === 0 ? 16 : 15} viewBox="0 0 7 15" preserveAspectRatio="none">
            <path d="M0 15 7 0v15z" fill={i === 0 ? '#fdfdfe' : '#d6dcec'} />
            <path d="M0 15 7 .5" stroke="#9ba5b4" />
          </svg>
          <TabFace $on={i === 0}>{label}</TabFace>
        </Tab>
      ))}
      <Spacer />
      <GearButton aria-label="Toolbar options"><Gear /></GearButton>
    </TabStrip>
    <Toolbar><Tools list={mainTools} /></Toolbar>
    <Toolbar $tall><Tools list={layerTools} /></Toolbar>

    <Workspace>
      <Palette><Tools list={sideTools} /></Palette>
      <Center>
        <Viewport>
          <Drawing><Board /></Drawing>
          <ViewTitle>Top<ViewMark><Triangle color="#000" /></ViewMark></ViewTitle>
          <Axes width="48" height="46" viewBox="0 0 48 46">
            <path d="M4.500 14v25.500H34" fill="none" stroke="#6e7176" />
            <g fill="#5e6064" fontFamily="Liberation Sans, Arial, sans-serif" fontSize="14" fontWeight="bold">
              <text x="6" y="12">y</text>
              <text x="36" y="42">x</text>
            </g>
          </Axes>
        </Viewport>
        <ViewTabs>
          <BottomTab w={77}>Perspective</BottomTab>
          <BottomTab w={39} bg="#ffffff">Top</BottomTab>
          <BottomTab w={46}>Front</BottomTab>
          <BottomTab w={46}>Right</BottomTab>
          <BottomTab w={31} bg="#dfe2ea">
            <svg width="9" height="9"><path d="M3.500.5h2v3h3v2h-3v3h-2v-3h-3v-2h3z" fill="#fff" stroke="#555" /></svg>
          </BottomTab>
        </ViewTabs>
      </Center>
      <Side>
        <PanelTabs>
          <SidePanelTab on w={80} slant={9} label="Properties" icon={<PanelIcon><Wheel /></PanelIcon>} />
          <SidePanelTab w={65} slant={9} label="Layers" icon={<PanelIcon box="4 4 19 21"><Wedge /></PanelIcon>} />
          <SidePanelTab w={69} slant={9} label="Display" icon={<Monitor />} />
          <SidePanelTab w={65} slant={20} label="Help" icon={<HelpBook />} />
          <Spacer />
          <GearButton aria-label="Panel options"><Gear /></GearButton>
        </PanelTabs>
        <PanelBody>
          <Props>
            <tbody>
              {groups.map(([title, list]) => (
                <React.Fragment key={title}>
                  <tr><Group colSpan={2}>{title}</Group></tr>
                  {list.map(row => <PropRow key={row[0]} group={title} row={row} />)}
                </React.Fragment>
              ))}
            </tbody>
          </Props>
        </PanelBody>
      </Side>
    </Workspace>

    <Snaps>
      {snaps.map(([label, w, on]) => (
        <Snap key={label} $w={w} $active={label === 'Disable'}>
          <Tick type="checkbox" defaultChecked={on} $round={w > 56} $solid={label === 'Disable'} />
          {label}
        </Snap>
      ))}
    </Snaps>
    <StatusBar>
      {status.map(([label, w, on]) => (
        <StatusCell key={label} $w={w} $on={on} $left={label === 'Default'}>
          {label === 'Default' && <Swatch />}{label}
        </StatusCell>
      ))}
      <StatusCell $left $grow>Available physical memory: 12845 MB</StatusCell>
      <StatusCell $w={7} aria-label="Resize" />
    </StatusBar>

    <Taskbar>
      <Pinned $w={54} aria-label="Start"><Orb /></Pinned>
      <Pinned $w={64} aria-label="Internet Explorer"><Explorer /></Pinned>
      <TaskGroup $mr={0}>
        <Task $w={121} $gap={12}><Folder />Daniele Ing...</Task>
        <Task $w={121} $gap={5}><Disk />USB DISK (E:)</Task>
        <Task $w={120} $gap={6}><Computer />Computer</Task>
      </TaskGroup>
      <Pinned $w={61} aria-label="Media Player"><Media /></Pinned>
      <Pinned $w={54} aria-label="Firefox"><Firefox /></Pinned>
      <Pinned $w={61} aria-label="Illustrator"><Adobe label="Ai" bg="#2b1a05" fg="#f7a02b" /></Pinned>
      <Pinned $w={58} aria-label="Photoshop"><Adobe label="Ps" bg="#0c0b52" fg="#7fbdf7" /></Pinned>
      <TaskGroup $mr={4}>
        <Task $on $w={121} $gap={5}><Rhino />Brett - Rhin...</Task>
        <Task $w={121} $gap={5}><Rhino />Fab12Scop...</Task>
        <Task $w={121} $gap={5}><Rhino />2DModell_...</Task>
      </TaskGroup>
      <TaskGroup $mr={3}>
        <Task $w={120} $gap={6}><Network />Network an...</Task>
        <Task $w={120} $gap={4}><Devices />Devices an...</Task>
      </TaskGroup>
      <TaskGroup $mr={3}>
        <Task $w={117} $gap={7}><Terminal />C:\Window...</Task>
      </TaskGroup>
      <TaskGroup $mr={0}>
        <Task $w={121} $gap={5}><Rhino />m - Rhinoc...</Task>
        <Task $w={120} $gap={5}><Rhino />Untitled - R...</Task>
      </TaskGroup>
      <Tray>
        <TrayItem $w={26}>DE</TrayItem>
        <TrayItem $w={28} aria-label="Show hidden icons"><Triangle up color="#fff" /></TrayItem>
        <TrayItem $w={22} aria-label="Action Center">
          <svg width="16" height="16"><path d="M1.500 1v14" stroke="#fff" strokeWidth="2" /><path d="M3 1l5 1 4-1v7l-4 1-5-1z" fill="#fff" /><circle cx="11" cy="11" r="4.5" fill="#d8232a" stroke="#fff" strokeWidth=".6" /><path d="M9 9l4 4M13 9l-4 4" stroke="#fff" strokeWidth="1.5" /></svg>
        </TrayItem>
        <TrayItem $w={26} aria-label="Network">
          <svg width="16" height="16"><path d="M1 1v4h4V1M3 5v10M5 3.500h10v9H5z" fill="none" stroke="#fff" /><path d="M10.500 6l5 9.500h-10z" fill="#fbd31c" /><path d="M10.500 9v3M10.500 13v1.500" stroke="#000" strokeWidth="1.5" /></svg>
        </TrayItem>
        <TrayItem $w={22} aria-label="Adobe">
          <svg width="14" height="14"><path d="M0 0h14v14H0z" fill="#d0140c" /><path d="M3 11.500V3h2l3 6M6 3h5v8.500L8 3.500" stroke="#fff" fill="none" /></svg>
        </TrayItem>
        <Clock>17:39<br />07.11.2017</Clock>
        <ShowDesktop aria-label="Show desktop" />
      </Tray>
    </Taskbar>
  </Page>
)

export default App;
